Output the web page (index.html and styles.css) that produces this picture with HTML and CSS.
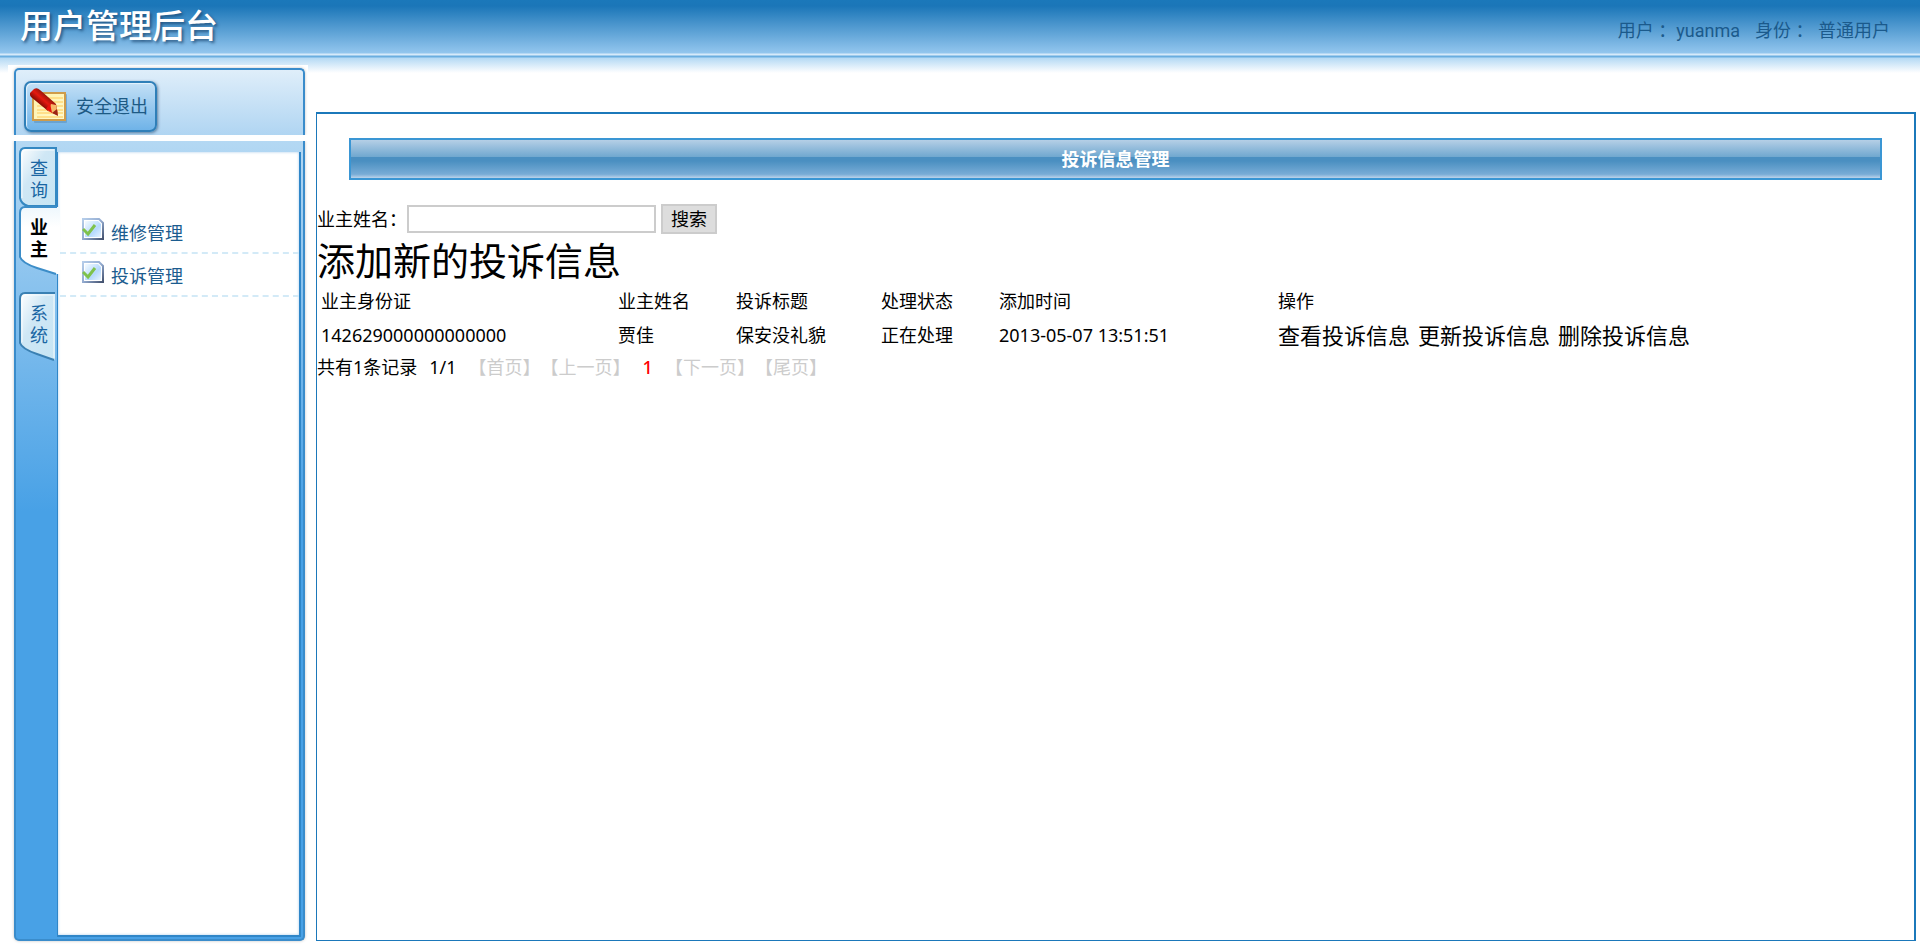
FILE: index.html
```html
<!DOCTYPE html>
<html lang="zh-CN">
<head>
  <meta charset="UTF-8" />
  <meta name="viewport" content="width=device-width, initial-scale=1" />
  <title>用户管理后台</title>
  <link rel="stylesheet" href="styles.css">
</head>
<body>

  <header class="top">
    <h1 class="logo">用户管理后台</h1>
    <div class="user-info">
      <span>用户 ：yuanma</span>
      <span>身份 ： 普通用户</span>
    </div>
  </header>

  <div class="wrapper">
    <aside class="sidebar">
      <div class="tools">
        <button type="button" class="logout">
          <svg width="38" height="36" viewBox="0 0 38 36" aria-hidden="true">
            <defs>
              <linearGradient id="paper" x1="0" y1="0" x2="1" y2="1">
                <stop offset="0" stop-color="#fff2a8" />
                <stop offset="1" stop-color="#fff9cf" />
              </linearGradient>
              <linearGradient id="red" gradientUnits="userSpaceOnUse" x1="9" y1="15" x2="16" y2="7">
                <stop offset="0" stop-color="#8f0d05" />
                <stop offset="0.5" stop-color="#e61a10" />
                <stop offset="1" stop-color="#98150a" />
              </linearGradient>
            </defs>
            <rect x="4" y="6" width="33" height="29" rx="1" fill="#5f93bd" opacity="0.6" />
            <rect x="3" y="5" width="32" height="27" fill="url(#paper)" stroke="#cf9c4a" stroke-width="2" />
            <path d="M15 10H33M19 14H33M7 18H33M7 22H33M7 25H33M7 29H33" stroke="#ffe08a" stroke-width="2" />
            <path d="M0 5L4 1Q7 -1 10 2L26 16L28 27L18 23L1 9Q-1 6 0 5Z" fill="url(#red)" />
            <path d="M18 23L21 16L26 17L28 27Z" fill="#f7b768" />
            <path d="M16 21L20 15L22 25Z" fill="#e8130c" />
            <path d="M22 25L27 21L28 28Z" fill="#9c2413" />
          </svg>
          <span>安全退出</span>
        </button>
      </div>

      <div class="nav-box">
        <nav class="tabs">
          <button type="button" class="tab tab-first">
            <svg width="38" height="60" viewBox="0 0 38 60" aria-hidden="true">
              <path d="M37 1H6Q1 1 1 7V51Q2 57 9 59H37Z" fill="url(#tabFill)" stroke="#3488c2" stroke-width="2" />
              <path d="M35 3H7Q3 3 3 8V51" fill="none" stroke="#fff" opacity="0.8" />
            </svg>
            <span>查询</span>
          </button>
          <button type="button" class="tab active">
            <svg width="41" height="70" viewBox="0 0 41 70" aria-hidden="true">
              <defs>
                <linearGradient id="tabActive" x1="0" y1="0" x2="0" y2="1">
                  <stop offset="0" stop-color="#eef7fd" />
                  <stop offset="0.3" stop-color="#fff" />
                </linearGradient>
              </defs>
              <path d="M41 1H6Q1 1 1 7V51Q3 57 18 62L37 68H41Z" fill="url(#tabActive)" />
              <path d="M38 1H6Q1 1 1 7V51Q3 57 18 62L37 68" fill="none" stroke="#3c8dc8" stroke-width="2" />
            </svg>
            <span>业主</span>
          </button>
          <button type="button" class="tab tab-last">
            <svg width="38" height="70" viewBox="0 0 38 70" aria-hidden="true">
              <defs>
                <linearGradient id="tabFill" x1="0" y1="0" x2="1" y2="1">
                  <stop offset="0" stop-color="#fff" />
                  <stop offset="0.4" stop-color="#cfe7f5" />
                  <stop offset="1" stop-color="#c6e5f4" />
                </linearGradient>
              </defs>
              <path d="M36 1H6Q1 1 1 7V51Q3 57 18 62L36 68Z" fill="url(#tabFill)" />
              <path d="M36 1H6Q1 1 1 7V51Q3 57 18 62L35 68" fill="none" stroke="#3a80b3" stroke-width="2" />
              <path d="M34 3H7Q3 3 3 8V50M35 2V66" fill="none" stroke="#fff" opacity="0.8" />
            </svg>
            <span>系统</span>
          </button>
        </nav>

        <ul class="menu">
          <li>
            <svg width="22" height="22" viewBox="0 0 22 22" aria-hidden="true">
              <defs>
                <linearGradient id="sheet" x1="0" y1="0" x2="1" y2="1">
                  <stop offset="0" stop-color="#f5fbff" />
                  <stop offset="0.6" stop-color="#b5d9fd" />
                  <stop offset="1" stop-color="#e6f3ff" />
                </linearGradient>
                <linearGradient id="edge" x1="0" y1="0" x2="1" y2="1">
                  <stop offset="0" stop-color="#b5cdea" />
                  <stop offset="0.5" stop-color="#93abd0" />
                  <stop offset="1" stop-color="#44526f" />
                </linearGradient>
              </defs>
              <path d="M1 1H17L21 5V21H1Z" fill="#fff" stroke="url(#edge)" stroke-width="2" />
              <path d="M3 3H16L19 6V19H3Z" fill="url(#sheet)" />
              <path d="M1 11L6 16L13 7" fill="none" stroke="#7fc24c" stroke-width="3" />
            </svg>
            <a href="#">维修管理</a>
          </li>
          <li>
            <svg width="22" height="22" viewBox="0 0 22 22" aria-hidden="true">
              <path d="M1 1H17L21 5V21H1Z" fill="#fff" stroke="url(#edge)" stroke-width="2" />
              <path d="M3 3H16L19 6V19H3Z" fill="url(#sheet)" />
              <path d="M1 11L6 16L13 7" fill="none" stroke="#7fc24c" stroke-width="3" />
            </svg>
            <a href="#">投诉管理</a>
          </li>
        </ul>
      </div>
    </aside>

    <main class="content">
      <h2 class="title-bar">投诉信息管理</h2>

      <form class="search">
        <label for="ownerName">业主姓名：</label>
        <input type="text" id="ownerName" name="ownerName" />
        <button type="submit">搜索</button>
      </form>

      <a class="add-link" href="#">添加新的投诉信息</a>

      <table class="list">
        <colgroup>
          <col class="col-id">
          <col class="col-name">
          <col class="col-subject">
          <col class="col-state">
          <col class="col-time">
          <col>
        </colgroup>
        <thead>
          <tr>
            <th>业主身份证</th>
            <th>业主姓名</th>
            <th>投诉标题</th>
            <th>处理状态</th>
            <th>添加时间</th>
            <th>操作</th>
          </tr>
        </thead>
        <tbody>
          <tr>
            <td>142629000000000000</td>
            <td>贾佳</td>
            <td>保安没礼貌</td>
            <td>正在处理</td>
            <td>2013-05-07 13:51:51</td>
            <td>
              <div class="actions">
                <a href="#">查看投诉信息</a>
                <a href="#">更新投诉信息</a>
                <a href="#">删除投诉信息</a>
              </div>
            </td>
          </tr>
        </tbody>
      </table>

      <div class="pager">
        <span>共有1条记录</span>
        <span>1/1</span>
        <span class="off">【首页】【上一页】</span>
        <span class="current">1</span>
        <span class="off">【下一页】【尾页】</span>
      </div>
    </main>
  </div>

  <script>
    // 只有一页结果，不提交表单
    document.querySelector('.search').addEventListener('submit', (e) => {
      e.preventDefault();
    });
  </script>

</body>
</html>
```

FILE: styles.css
```css
* {
  box-sizing: border-box;
}

body {
  display: flex;
  flex-direction: column;
  min-height: 100vh;
  margin: 0;
  padding-bottom: 8px;
  font-family: "Noto Sans", "Noto Sans CJK SC", sans-serif;
  font-size: 18px;
  line-height: 24px;
  color: #000;
  text-spacing-trim: space-all;
  background: #fff linear-gradient(#1b78ba 0, #1b76b8 6px, #93c6ee 53px, #d6eafa 54px, #d6eafa 55px, #6aaee0 56px, #6aaee0 57px, #b4d9f4 58px, #fff 73px) no-repeat 0 0 / 100% 73px;
}

a {
  color: inherit;
  text-decoration: none;
}

button, input {
  font: inherit;
}

/* 顶部 */
.top {
  display: flex;
  justify-content: space-between;
  height: 65px;
  padding: 0 30px 0 20px;
}

.logo {
  margin: 0;
  font-size: 33px;
  font-weight: 500;
  line-height: 52px;
  color: #fff;
  text-shadow: 2px 2px 3px rgba(20, 60, 100, 0.7);
}

.user-info {
  display: flex;
  gap: 15px;
  padding-top: 19px;
  font-family: Roboto, "Noto Sans CJK SC", sans-serif;
  color: #1b5a8c;
}

.wrapper {
  display: flex;
  flex: 1;
  gap: 8px;
  padding: 0 4px 0 8px;
}

/* 左侧菜单 */
.sidebar {
  display: flex;
  flex-direction: column;
  gap: 6px;
  flex: 0 0 300px;
  padding: 3px 3px 0 6px;
  background: #fff;
}

.tools {
  height: 67px;
  padding: 11px 8px;
  border: 2px solid #3a8ccb;
  border-bottom: 0;
  border-radius: 5px 5px 0 0;
  background: linear-gradient(#dfeefa, #b0d5f2);
  box-shadow: 0 0 3px rgba(0, 0, 0, 0.25);
  clip-path: inset(-3px -3px 0);
}

.logout {
  display: flex;
  align-items: center;
  gap: 8px;
  height: 51px;
  padding: 0 7px 2px 4px;
  border: 2px solid #2f7fb8;
  border-radius: 7px;
  background: linear-gradient(#c3e0f6, #6fb3e8);
  box-shadow: 1px 1px 3px rgba(0, 40, 80, 0.5), inset 1px 1px 1px #e6f4fd;
  color: #1d5a85;
  white-space: nowrap;
  cursor: pointer;
}

.nav-box {
  display: flex;
  flex: 1;
  padding: 0 2px 2px 0;
  border: 2px solid #3a8ccb;
  border-top: 0;
  border-radius: 0 0 5px 5px;
  background: #48a1e6 linear-gradient(#b4d8f3, #48a1e6) no-repeat 0 0 / 100% 370px;
  box-shadow: 0 0 3px rgba(0, 0, 0, 0.25);
  clip-path: inset(0 -3px -3px);
}

.tabs {
  flex: 0 0 41px;
  padding: 6px 0 0 3px;
}

.tab {
  position: relative;
  z-index: 1;
  display: grid;
  width: 38px;
  padding: 0;
  border: 0;
  background: none;
  color: #1a66a3;
  line-height: 22px;
  cursor: pointer;
}

.tab svg,
.tab span {
  grid-area: 1 / 1;
}

.tab span {
  width: 18px;
  margin: 10px 0 0 11px;
}

.tab-first {
  height: 59px;
}

.tab.active {
  height: 70px;
  color: #000;
  font-weight: bold;
}

.tab-last {
  margin-top: 16px;
}

.menu {
  flex: 1;
  margin: 11px 0 0;
  padding: 59px 0 0 2px;
  border: solid #2f86c8;
  border-width: 0 2px 2px 1px;
  background: #fff;
  box-shadow: inset 0 0 3px #a9cdea;
  list-style: none;
}

.menu li {
  display: flex;
  align-items: flex-start;
  gap: 7px;
  height: 43px;
  padding: 7px 0 0 22px;
  border-bottom: 2px dashed #d3eaf7;
  color: #1b5c8f;
}

.menu a {
  padding-top: 3px;
}

/* 内容 */
.content {
  flex: 1;
  min-width: 0;
  margin-top: 47px;
  padding-top: 24px;
  border: 1px solid #1b78ba;
  border-width: 2px 2px 1px 1px;
}

.title-bar {
  height: 42px;
  margin: 0 32px 24px;
  border: 2px solid #3a96d4;
  background: linear-gradient(#b5cfe6, #6fa7cf 45%, #4a8fc1 46%, #4a8fc1 55%, #78acd6 90%, #bcd3ea);
  color: #fff;
  font-size: 18px;
  line-height: 38px;
  text-align: center;
}

.search {
  display: flex;
  align-items: center;
  height: 30px;
}

.search input {
  width: 249px;
  height: 28px;
  padding: 0 4px;
  border: 2px solid #ccc;
  background: #fff;
}

.search button {
  height: 30px;
  margin-left: 5px;
  padding: 0 8px;
  border: 2px solid #ccc;
  background: #ddd;
  line-height: 26px;
  cursor: pointer;
}

.add-link {
  display: inline-block;
  margin-top: 2px;
  font-size: 38px;
  line-height: 48px;
  vertical-align: top;
}

.list {
  width: 100%;
  border-collapse: collapse;
  table-layout: fixed;
}

.col-id {
  width: 297px;
}

.col-name,
.col-state {
  width: 118px;
}

.col-subject {
  width: 145px;
}

.col-time {
  width: 279px;
}

.list th,
.list td {
  height: 34px;
  padding: 0 4px;
  font-weight: normal;
  text-align: left;
}

.actions {
  display: flex;
  gap: 8px;
  font-size: 22px;
  line-height: 32px;
}

.pager {
  display: flex;
  gap: 12px;
  padding-top: 3px;
}

.pager .off {
  color: #ccc;
}

.pager .current {
  color: #f00;
  font-weight: 500;
}
```
